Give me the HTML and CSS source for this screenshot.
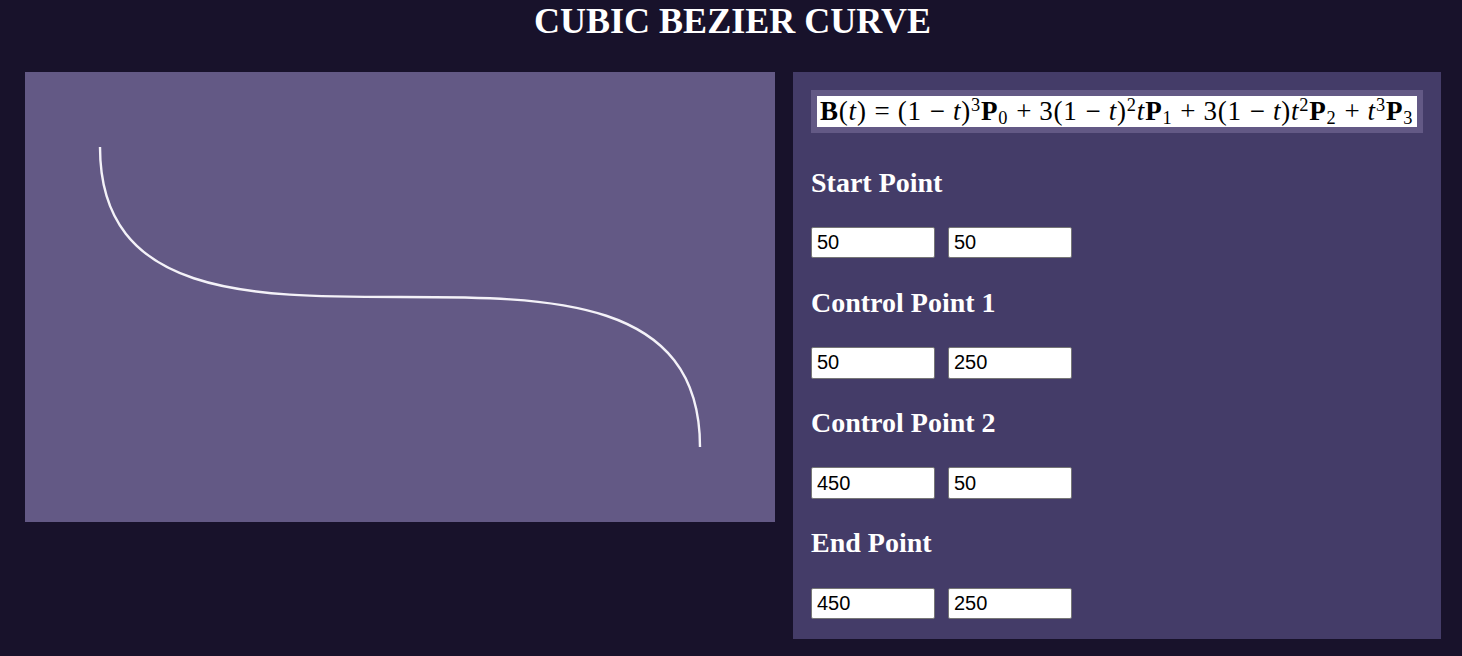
FILE: index.html
```html
<!DOCTYPE html>
<html lang="en">
<head>
<meta charset="utf-8">
<title>Cubic Bezier Curve</title>
<link rel="stylesheet" href="styles.css">
</head>
<body>
<h1 class="title">CUBIC BEZIER CURVE</h1>
<main class="layout">
  <div class="canvas">
    <svg class="curve" viewBox="0 0 500 300" width="750" height="450" xmlns="http://www.w3.org/2000/svg">
      <path d="M50 50 C50 250 450 50 450 250" fill="none" stroke="#f4f2f8" stroke-width="1.6"/>
    </svg>
  </div>
  <section class="panel">
    <div class="formula-box">
      <div class="formula"><b>B</b>(<i>t</i>)<span class="rel">=</span>(1<span class="bin">−</span><i>t</i>)<sup>3</sup><b>P</b><sub>0</sub><span class="bin">+</span>3(1<span class="bin">−</span><i>t</i>)<sup>2</sup><i>t</i><b>P</b><sub>1</sub><span class="bin">+</span>3(1<span class="bin">−</span><i>t</i>)<i>t</i><sup>2</sup><b>P</b><sub>2</sub><span class="bin">+</span><i>t</i><sup>3</sup><b>P</b><sub>3</sub></div>
    </div>
    <h2 class="point-title">Start Point</h2>
    <div class="inputs"><input class="num" type="text" value="50"><input class="num" type="text" value="50"></div>
    <h2 class="point-title">Control Point 1</h2>
    <div class="inputs"><input class="num" type="text" value="50"><input class="num" type="text" value="250"></div>
    <h2 class="point-title">Control Point 2</h2>
    <div class="inputs"><input class="num" type="text" value="450"><input class="num" type="text" value="50"></div>
    <h2 class="point-title">End Point</h2>
    <div class="inputs"><input class="num" type="text" value="450"><input class="num" type="text" value="250"></div>
  </section>
</main>
</body>
</html>
```
FILE: styles.css
```css
html, body {
  margin: 0;
  padding: 0;
}
body {
  background: #18122b;
  color: #ffffff;
  font-family: "Liberation Serif", "Times New Roman", serif;
  width: 1462px;
  height: 656px;
  overflow: hidden;
}
.title {
  margin: 0;
  padding-left: 3px;
  font-size: 36px;
  font-weight: bold;
  text-align: center;
  line-height: normal;
}
.layout {
  display: flex;
  align-items: flex-start;
  gap: 18px;
  padding-left: 25px;
  margin-top: 29.6px;
}
.canvas {
  width: 750px;
  height: 450px;
  background: #635985;
  flex: none;
}
.curve {
  display: block;
}
.panel {
  width: 648px;
  box-sizing: border-box;
  background: #443c68;
  padding: 18px 18px 20px;
  flex: none;
}
.formula-box {
  background: #635985;
  padding: 6px;
  margin-bottom: 34px;
}
.formula {
  background: #ffffff;
  color: #000000;
  height: 31px;
  line-height: 30px;
  font-family: "Liberation Serif", "Times New Roman", serif;
  font-size: 27px;
  letter-spacing: 0.8px;
  white-space: nowrap;
  padding-left: 3px;
  overflow: hidden;
}
.formula b {
  font-weight: bold;
}
.formula sup, .formula sub {
  font-size: 0.68em;
  line-height: 0;
}
.formula sup {
  vertical-align: 0.5em;
}
.formula sub {
  vertical-align: -0.22em;
}
.rel, .bin {
  display: inline-block;
  width: 0.75em;
  text-align: center;
  letter-spacing: 0;
  margin: 0 0.2em;
}
.point-title {
  margin: 28.4px 0;
  font-size: 28px;
  font-weight: bold;
  line-height: normal;
}
.inputs {
  display: flex;
  gap: 13px;
}
.num {
  width: 124px;
  height: 31.4px;
  box-sizing: border-box;
  margin: 0;
  padding: 3px 5px;
  border: 1px solid #767676;
  border-radius: 2px;
  background: #ffffff;
  color: #000000;
  font-family: "Liberation Sans", Arial, sans-serif;
  font-size: 20px;
}
```
